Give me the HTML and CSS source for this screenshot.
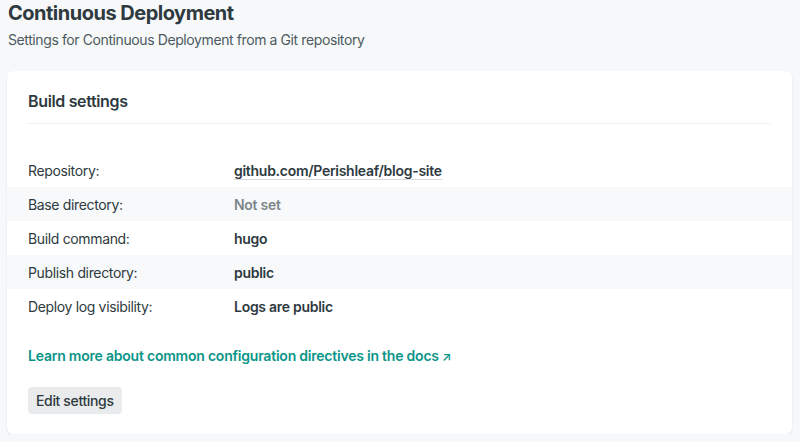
FILE: index.html
```html
<!DOCTYPE html>
<html>
<head>
<meta charset="utf-8" />
<title>Continuous Deployment</title>
<link rel="stylesheet" href="styles.css">
</head>
<body>

<header class="page-head">
  <h1>Continuous Deployment</h1>
  <p>Settings for Continuous Deployment from a Git repository</p>
</header>

<section class="card">
  <h2 class="card-title">Build settings</h2>

  <dl class="settings">
    <div class="row">
      <dt>Repository:</dt>
      <dd><a class="repo" href="#">github.com/Perishleaf/blog-site</a></dd>
    </div>
    <div class="row">
      <dt>Base directory:</dt>
      <dd class="unset">Not set</dd>
    </div>
    <div class="row">
      <dt>Build command:</dt>
      <dd>hugo</dd>
    </div>
    <div class="row">
      <dt>Publish directory:</dt>
      <dd>public</dd>
    </div>
    <div class="row">
      <dt>Deploy log visibility:</dt>
      <dd>Logs are public</dd>
    </div>
  </dl>

  <a class="docs" href="#">Learn more about common configuration directives in the docs <span class="arrow">&#8599;</span></a>

  <div>
    <button class="btn">Edit settings</button>
  </div>
</section>

</body>
</html>
```

FILE: styles.css
```css
html, body {
  margin: 0;
  padding: 0;
}
body {
  background: #f6f8f9;
  color: #2e3a40;
  font-family: Inter, "Noto Sans", sans-serif;
  font-size: 14px;
  letter-spacing: -0.35px;
}
.page-head {
  padding: 0 8px;
}
.page-head h1 {
  margin: 0;
  font-size: 20px;
  line-height: 26px;
  font-weight: 700;
  letter-spacing: -0.5px;
}
.page-head p {
  margin: 5px 0 0;
  font-size: 14px;
  line-height: 18px;
  color: #4d5a60;
  letter-spacing: -0.4px;
}
.card {
  margin: 22px 8px 0 7px;
  padding: 20px 21px 20px;
  background: #fff;
  border-radius: 6px;
  box-shadow: 0 1px 2px rgba(30, 45, 55, 0.12);
}
.card-title {
  margin: 0;
  padding-bottom: 12px;
  border-bottom: 1px solid #eef0f1;
  font-size: 16px;
  line-height: 20px;
  font-weight: 600;
}
.settings {
  margin: 29px -21px 0;
  padding: 0;
}
.row {
  display: flex;
  align-items: center;
  height: 34px;
  padding: 0 21px;
}
.row:nth-child(even) {
  background: #f7f9fa;
}
.row dt {
  width: 206px;
  flex: none;
}
.row dd {
  margin: 0;
  font-weight: 600;
  letter-spacing: -0.28px;
}
.row dd.unset {
  color: #7d868a;
}
.repo {
  color: inherit;
  text-decoration: none;
  border-bottom: 1px solid #d8dcde;
}
.docs {
  display: inline-block;
  margin-top: 23px;
  line-height: 20px;
  color: #0a9588;
  font-weight: 600;
  letter-spacing: -0.22px;
  text-decoration: none;
}
.arrow {
  font-size: 12px;
}
.btn {
  margin-top: 20px;
  height: 27px;
  padding: 0 8px;
  border: 0;
  border-radius: 4px;
  background: #e9ebec;
  color: #2e3a40;
  font-family: inherit;
  font-size: 14px;
  font-weight: 500;
  letter-spacing: -0.35px;
}
```
